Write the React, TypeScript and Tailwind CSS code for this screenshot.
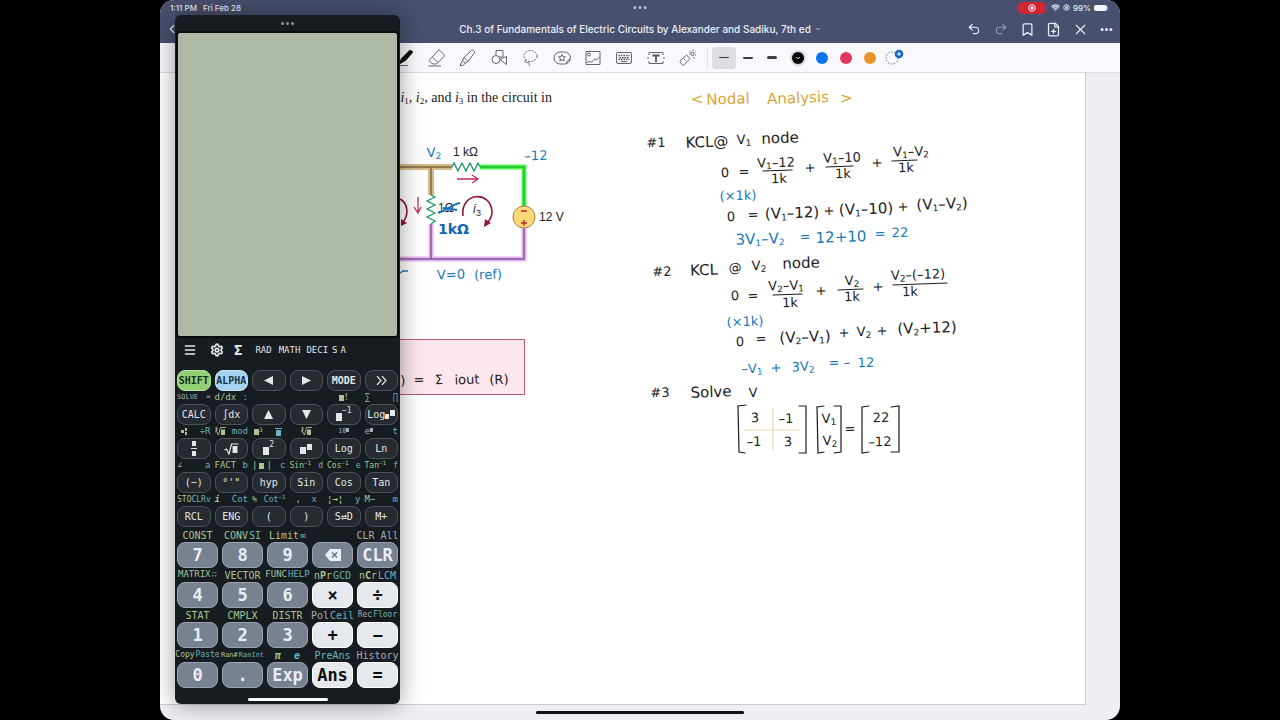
import { Fragment } from "react";
import type { ReactNode } from "react";
import { Bookmark, Ellipsis, FilePlus, Menu, Redo2, Settings, Undo2, Wifi, X, ChevronDown, ChevronLeft } from "lucide-react";

/* ---------- handwriting ---------- */

type Tone = "black" | "blue" | "gold";

// [text, centre x, centre y, tone] in page coordinates, "_n" is a subscript
type Stroke = [string, number, number, Tone?];

const TONES: Record<Tone, string> = {
  black: "text-[#1c1c1e]",
  blue: "text-[#1678b8]",
  gold: "text-[#d9a336]",
};

// headings and the expanded equations are written larger than the fractions
const LARGE: Stroke[] = [
  ["<", 537, 26, "gold"],
  ["Nodal", 568, 26, "gold"],
  ["Analysis", 638, 25, "gold"],
  [">", 686, 25, "gold"],
  ["KCL@", 547, 69],
  ["node", 620, 65],
  ["(V_1–12)", 632, 140],
  ["(V_1–10)", 706, 136],
  ["(V_1–V_2)", 782, 131],
  ["3V_1–V_2", 600, 166, "blue"],
  ["12+10", 681, 164, "blue"],
  ["KCL", 544, 197],
  ["node", 641, 190],
  ["(V_2–V_1)", 645, 264],
  ["(V_2+12)", 767, 255],
  ["Solve", 551, 319],
];

const NOTES: Stroke[] = [
  ["#1", 496, 70],
  ["V_1", 584, 67],
  ["0", 565, 100],
  ["=", 584, 99],
  ["V_1–12", 616, 90],
  ["1k", 619, 106],
  ["+", 650, 95],
  ["V_1–10", 682, 85],
  ["1k", 683, 101],
  ["+", 717, 90],
  ["V_1–V_2", 751, 79],
  ["1k", 746, 95],
  ["(×1k)", 578, 123, "blue"],
  ["0", 571, 144],
  ["=", 593, 142],
  ["+", 669, 138],
  ["+", 743, 134],
  ["=", 645, 164, "blue"],
  ["=", 720, 161, "blue"],
  ["22", 740, 160, "blue"],
  ["#2", 502, 199],
  ["@", 575, 195],
  ["V_2", 599, 193],
  ["0", 575, 223],
  ["=", 593, 223],
  ["V_2–V_1", 626, 213],
  ["1k", 630, 230],
  ["+", 661, 218],
  ["V_2", 692, 208],
  ["1k", 692, 224],
  ["+", 718, 214],
  ["V_2–(–12)", 758, 202],
  ["1k", 750, 219],
  ["(×1k)", 585, 249, "blue"],
  ["0", 580, 269],
  ["=", 601, 266],
  ["+", 684, 260],
  ["V_2", 704, 259],
  ["+", 722, 258],
  ["–V_1", 592, 296, "blue"],
  ["+", 616, 295, "blue"],
  ["3V_2", 643, 294, "blue"],
  ["=", 674, 290, "blue"],
  ["–", 687, 290, "blue"],
  ["12", 706, 290, "blue"],
  ["#3", 500, 320],
  ["V", 593, 320],
  ["3", 595, 345],
  ["–1", 626, 346],
  ["–1", 594, 369],
  ["3", 628, 369],
  ["V_1", 669, 346],
  ["V_2", 670, 368],
  ["=", 690, 356],
  ["22", 721, 345],
  ["–12", 720, 369],
  [")", 243, 308],
  ["=", 259, 307],
  ["Σ", 279, 307],
  ["iout", 307, 307],
  ["(R)", 339, 307],
  ["V_2", 274, 80, "blue"],
  ["–12", 376, 83, "blue"],
  ["V=0", 291, 202, "blue"],
  ["(ref)", 328, 202, "blue"],
];

function withSubs(text: string) {
  return text.split(/_(\d)/).map((part, i) => (i % 2 ? <sub key={i} className="text-[9px]">{part}</sub> : <Fragment key={i}>{part}</Fragment>));
}

function Ink({ strokes, size }: { strokes: Stroke[]; size: string }) {
  return (
    <>
      {strokes.map(([text, x, y, tone = "black"], i) => (
        <span
          key={i}
          className={`absolute -translate-x-1/2 -translate-y-1/2 -rotate-2 whitespace-nowrap font-['DejaVu_Sans','Noto_Sans',sans-serif] leading-4 ${size} ${TONES[tone]}`}
          style={{ left: x, top: y }}
        >
          {withSubs(text)}
        </span>
      ))}
    </>
  );
}

// fraction bars and matrix brackets
function Rules() {
  return (
    <svg className="absolute left-[560px] top-[80px] h-[310px] w-[240px]" viewBox="720 153 240 310" fill="none" stroke="#1c1c1e" strokeWidth="1.2" strokeLinecap="round">
      <path d="M763 171l29-1M826 167l27-1M892 161l25-1M773 295l29-1M838 290l25-1M893 285l54-2" />
      <path d="M746 405l-8 1 1 46 6 1M799 406h7v47h-7M824 406l-7 1 1 46 6-1M834 406h7v46l-7 1M869 406l-7 1v46l7-1M891 407l8-1v46h-8" />
      <path d="M773 408v42M744 430h56" stroke="#e9d9a8" />
    </svg>
  );
}

function Circuit() {
  return (
    <svg className="absolute left-[240px] top-[67px] h-[140px] w-[170px]" viewBox="400 140 170 140" fill="none">
      <path d="M400 167h52M431 167v28" stroke="#d3bb8c" strokeWidth="6" />
      <path d="M400 167h52M431 167v28" stroke="#80683c" strokeWidth="1.5" />
      <path d="M480 167h44v40" stroke="#4cf84f" strokeWidth="5" />
      <path d="M480 167h44v40" stroke="#1dbb2b" strokeWidth="1.5" />
      <path d="M400 259h124v-31M431 224v35" stroke="#e3b3ee" strokeWidth="5" />
      <path d="M400 259h124v-31M431 224v35" stroke="#8b55a0" strokeWidth="1.5" />
      <path d="M452 167l2-4 4 8 4-8 4 8 4-8 4 8 4-8 2 4" stroke="#22946c" strokeWidth="1.3" />
      <path d="M431 195l4 2-8 4 8 4-8 4 8 4-8 4 8 4-4 3" stroke="#22946c" strokeWidth="1.3" />
      <circle cx="524" cy="217" r="11" fill="#ffd878" stroke="#a5803f" />
      <path d="M521 211h6M521 223h6M524 220v6" stroke="#c0272d" strokeWidth="1.4" />
      <path d="M457 179h21M472 175l6 4-6 4M418 197v15M414 207l4 6 3-6" stroke="#c32f52" strokeWidth="1.3" />
      <path d="M463 216c-3-24 28-26 29-4 0 5-2 8-5 11M400 199c8 4 9 16 3 23" stroke="#8f1738" strokeWidth="1.6" />
      <path d="M484 227l1-8 6 4zM401 226l0-7 6 4z" fill="#8f1738" />
      <g className="font-['Liberation_Sans',Arial,sans-serif]" fill="#1c1c1e">
        <text x="453" y="156" fontSize="12">1 kΩ</text>
        <text x="438" y="212" fontSize="12">1Ω</text>
        <text x="539" y="221" fontSize="12">12 V</text>
        <text x="473" y="213" fontSize="12" fontStyle="italic">i</text>
        <text x="476" y="216" fontSize="9">3</text>
      </g>
      <path d="M438 213c7-2 15-9 22-10M443 208l14 2" stroke="#1272b8" strokeWidth="1.8" />
      <text x="438" y="234" fontSize="14" fontWeight="700" fill="#1467b0" className="font-['DejaVu_Sans',sans-serif]">1kΩ</text>
      <path d="M400 273l3-2h5" stroke="#1678b8" strokeWidth="1.4" />
    </svg>
  );
}

/* ---------- note app chrome ---------- */

function StatusBar() {
  return (
    <div className="relative flex h-[15px] items-center justify-between pl-[10px] pr-[11px] text-[8px] font-medium">
      <div className="flex gap-[6px]">
        <span>1:11 PM</span>
        <span>Fri Feb 28</span>
      </div>
      <div className="absolute left-1/2 flex -translate-x-1/2 gap-[2px]">
        <i className="size-[3px] rounded-full bg-[#b9bfd2]" />
        <i className="size-[3px] rounded-full bg-[#b9bfd2]" />
        <i className="size-[3px] rounded-full bg-[#b9bfd2]" />
      </div>
      <div className="flex items-center gap-[3px]">
        <span className="mr-[2px] flex h-3 w-7 items-center justify-center rounded-[5px] bg-[#cf2432]">
          <svg className="size-2" viewBox="0 0 8 8" fill="none" stroke="#fff">
            <circle cx="4" cy="4" r="3.3" />
            <circle cx="4" cy="4" r="1.2" fill="#fff" />
          </svg>
        </span>
        <Wifi className="size-[9px]" strokeWidth={3} />
        <svg className="size-[7px]" viewBox="0 0 8 8" fill="none" stroke="#dfe3ef">
          <circle cx="4" cy="4" r="3.2" />
          <path d="M3 4V3a1 1 0 0 1 2 0v1M2.800 4h2.400v1.500H2.800z" />
        </svg>
        <span>99%</span>
        <svg className="h-[6px] w-[15px]" viewBox="0 0 15 6">
          <rect width="13" height="6" rx="2" fill="#f2f4fa" />
          <path d="M14 2v2" stroke="#a9b0c8" />
        </svg>
      </div>
    </div>
  );
}

function TitleBar() {
  const button = "flex h-5 items-center justify-center";
  return (
    <div className="relative flex h-7 items-center justify-between pl-[5px]">
      <button aria-label="Back">
        <ChevronLeft className="size-[14px]" />
      </button>
      <h1 className="absolute left-1/2 flex -translate-x-1/2 items-center gap-1 whitespace-nowrap text-[10px] font-medium">
        Ch.3 of Fundamentals of Electric Circuits by Alexander and Sadiku, 7th ed
        <ChevronDown className="size-[6px]" strokeWidth={3} />
      </h1>
      <div className="grid w-[159px] grid-cols-6">
        <button aria-label="Undo" className={button}><Undo2 className="size-[14px]" /></button>
        <button aria-label="Redo" className={`${button} opacity-45`}><Redo2 className="size-[14px]" /></button>
        <button aria-label="Bookmark" className={button}><Bookmark className="size-[15px]" /></button>
        <button aria-label="Add page" className={button}><FilePlus className="size-[15px]" /></button>
        <button aria-label="Close" className={button}><X className="size-[17px]" strokeWidth={1.5} /></button>
        <button aria-label="More" className={button}><Ellipsis className="size-[15px]" strokeWidth={3} /></button>
      </div>
    </div>
  );
}

const TOOLS: [string, ReactNode][] = [
  ["Pen", <><path d="M16 3L9 11l-5 3 2-4 8-8z" fill="#111" stroke="#111" strokeWidth="2" /><path d="M2 16.500h10" /></>],
  ["Eraser", <><path d="M2.500 11L11 1.500q1-.8 2 0l4 4q.8 1 0 2L9.500 15H6l-3.500-2.500q-.8-.7 0-1.500zM5.500 8l5.500 5.500M1.500 17H14" /></>],
  ["Highlighter", <><path d="M6 8.500L13.500 1.500q1-.8 2 0l.8.8q.8.8 0 1.800L10 12.500zM6 8.500l-1.500 3 3 2.500 2.500-1.500M4.500 11.500L2 16.500h3l2.500-2.500" /></>],
  ["Shapes", <><path d="M6 6V1.500h7V8H9.500" /><circle cx="6" cy="10.500" r="4" /><path d="M10 10.500l6.500-3v8z" /></>],
  ["Lasso", <><ellipse cx="9.500" cy="7" rx="6.500" ry="5.500" strokeDasharray="2 1.200" /><path d="M5 11c-2 1-1 3 1 2.500s3 1 2 3.500" /></>],
  ["Elements", <><path d="M13 15H7A6 6 0 0 1 7 3h4.500a6 6 0 0 1 6 6q-.2 4-4.500 6 .5-3.500 4-5" /><path d="M9 5.500l1 2.200 2.400.2-1.800 1.600.6 2.400L9 10.700l-2.200 1.200.6-2.400-1.800-1.600L8 7.700z" /></>],
  ["Image", <><path d="M2 2.500h14v13H2z" /><circle cx="5" cy="5.500" r="1.500" /><path d="M2.500 13.500l3-1 2 .5 3.500-3 1.500 1 3-3" /></>],
  ["Keyboard", <><rect x="1.500" y="3.500" width="15" height="11" rx="1.500" /><path d="M3.500 6.500h11M4.500 8.700h10M3.500 10.500h11" strokeDasharray="1.500 1" strokeWidth="1.400" /><path d="M6 12.700h6" /></>],
  ["Text", <><path d="M2 6V3.500h14V6M2 12v2.500h14V12M1 8v2M17 8v2" /><path d="M5.500 6.500h7M9 6.500V13" strokeWidth="1.800" /></>],
  ["Laser pointer", <><path d="M3 11l5.500-5 3.500 3.500-5.500 6q-1 1-2 .2L2.500 14q-1-1.500.5-3zM6 10l1.500 1.500" /><path d="M13 3.500l-1.500-1M15 2V.5M17 3.500l1-1M17 6h1.500M15.500 8l1 1.500M11 5.500l.8-.5" /><circle cx="14.500" cy="5" r="1.600" /></>],
];

const WIDTHS = ["h-px", "h-[2px]", "h-[3px]"];
const COLORS = [
  ["Blue", "bg-[#0b73ef]"],
  ["Red", "bg-[#e4365c]"],
  ["Orange", "bg-[#e8922a]"],
];

function ToolBar() {
  return (
    <div className="flex h-[30px] items-center border-b border-[#dddce2] bg-[#faf8fc] pl-[229px]">
      <div className="grid w-[314px] grid-cols-10">
        {TOOLS.map(([name, art]) => (
          <button key={name} aria-label={name} className="flex h-6 items-center justify-center">
            <svg className="size-[18px]" viewBox="0 0 18 18" fill="none" stroke="#55555b" strokeWidth="0.9" strokeLinejoin="round">{art}</svg>
          </button>
        ))}
      </div>
      <div className="mx-1 h-5 w-px bg-[#dedde3]" />
      <div className="mr-[2px] flex">
        {WIDTHS.map((h, i) => (
          <button key={h} aria-label={`Stroke width ${i + 1}`} className={`flex h-[22px] w-6 items-center justify-center rounded ${i === 0 ? "bg-[#dddce0]" : ""}`}>
            <i className={`w-[10px] rounded-full bg-[#3c3c40] ${h}`} />
          </button>
        ))}
      </div>
      <button aria-label="Black" className="flex h-6 w-6 items-center justify-center">
        <span className="flex size-3 items-center justify-center rounded-full bg-black ring-2 ring-[#dbdadf]">
          <ChevronDown className="size-[6px] text-white" strokeWidth={4} />
        </span>
      </button>
      {COLORS.map(([name, color]) => (
        <button key={name} aria-label={name} className="flex h-6 w-6 items-center justify-center">
          <i className={`size-3 rounded-full ${color}`} />
        </button>
      ))}
      <button aria-label="Add colour" className="flex h-6 w-6 items-center justify-center">
        <svg className="h-5 w-[20px]" viewBox="0 0 20 20" fill="none">
          <circle cx="8" cy="10" r="6" stroke="#3f6ea8" strokeDasharray="1.500 1.500" />
          <circle cx="15" cy="6" r="4.300" fill="#1668c9" />
          <path d="M15 4v4M13 6h4" stroke="#fff" />
        </svg>
      </button>
    </div>
  );
}

/* ---------- calculator ---------- */

const Sq = ({ className = "h-2 w-[6px]" }: { className?: string }) => <i className={`inline-block bg-current ${className}`} />;
const Mini = () => <Sq className="h-[6px] w-[5px]" />;

const GREEN = "text-[#a9c492]";
const TEAL = "text-[#6cb3bb]";
const GREY = "text-[#a4acb0]";

interface KeyDef {
  id: string;
  face: ReactNode;
  shift?: ReactNode;
  alpha?: ReactNode;
  label?: string;
  tone?: string;
}

const Root = ({ className }: { className: string }) => (
  <svg className={className} viewBox="0 0 14 12" fill="none" stroke="currentColor" strokeWidth="1.200">
    <path d="M0 7l2-1 2.500 5L7 1h7" />
    <path d="M8 3h5v7H8z" fill="currentColor" stroke="none" />
  </svg>
);

const CubeRoot = () => (
  <svg className="h-[9px] w-[11px]" viewBox="0 0 11 9" fill="none" stroke="currentColor">
    <path d="M0 5l1.500-.5L3.500 8 5.500.5H11M.5.500h1.500v3H.5M.5 2h1.500" strokeWidth="0.900" />
    <path d="M6 2.500h4V8H6z" fill="currentColor" stroke="none" />
  </svg>
);

const SMALL_KEYS: KeyDef[] = [
  { id: "shift", face: "SHIFT", tone: "bg-[#93cf75] text-[#16301a] font-bold border-[#b5e29c]" },
  { id: "alpha", face: "ALPHA", tone: "bg-[#a5d2ee] text-[#1b3349] font-bold border-[#c8e5f6]" },
  { id: "left", face: <svg className="size-[9px]" viewBox="0 0 8 8"><path d="M0 4l8-4v8z" fill="currentColor" /></svg> },
  { id: "right", face: <svg className="size-[9px]" viewBox="0 0 8 8"><path d="M8 4L0 0v8z" fill="currentColor" /></svg> },
  { id: "mode", face: <b>MODE</b> },
  { id: "fast", face: <svg className="h-[9px] w-[11px]" viewBox="0 0 11 9" fill="none" stroke="currentColor" strokeWidth="1.200"><path d="M1 0l4 4.500L1 9M6 0l4 4.500L6 9" /></svg> },
  { id: "calc", face: "CALC", shift: <span className={GREY}>SOLVE</span>, alpha: <span className={GREY}>=</span>, label: "text-[7px]" },
  { id: "int", face: "∫dx", shift: "d/dx", alpha: ":" },
  { id: "up", face: <svg className="size-[9px]" viewBox="0 0 8 8"><path d="M4 0l4 8H0z" fill="currentColor" /></svg> },
  { id: "down", face: <svg className="size-[9px]" viewBox="0 0 8 8"><path d="M4 8l4-8H0z" fill="currentColor" /></svg> },
  { id: "inv", face: <><Sq className="mt-1 h-2 w-[6px]" /><span className="mb-2 text-[8px]">−1</span></>, shift: <><Mini />!</> },
  { id: "logb", face: <>Log<Sq className="mt-1 h-[5px] w-1" /><Sq className="mb-1 ml-px h-[6px] w-[5px]" /></>, shift: "∑", alpha: "∏" },
  { id: "frac", face: <span className="flex flex-col items-center gap-[2px]"><Sq className="h-[5px] w-1" /><i className="h-px w-[6px] bg-current" /><Sq className="h-[5px] w-1" /></span>, shift: <span className="ml-1 flex items-center gap-px"><Sq className="size-[3px]" /><span className="flex flex-col gap-px"><Sq className="h-[3px] w-[2px]" /><Sq className="h-[3px] w-[2px]" /></span></span>, alpha: "÷R" },
  { id: "sqrt", face: <Root className="h-3 w-[15px]" />, shift: <CubeRoot />, alpha: "mod" },
  { id: "sq", face: <><Sq className="mt-1 h-2 w-[6px]" /><span className="mb-2 text-[8px]">2</span></>, shift: <span className="ml-[2px] flex items-center"><Mini /><span className="mb-1 text-[6px]">3</span></span>, alpha: <span className="mr-1 flex flex-col items-center gap-px"><i className="h-px w-[7px] bg-current" /><Mini /></span> },
  { id: "pow", face: <><Sq className="mt-1 h-[7px] w-[6px]" /><Sq className="mb-1 ml-px h-[6px] w-[5px]" /></>, shift: <CubeRoot /> },
  { id: "log", face: "Log", shift: <span className={`flex items-center ${GREY}`}>10<Sq className="mb-1 h-1 w-[3px]" /></span>, label: "text-[7px]" },
  { id: "ln", face: "Ln", shift: <span className={`flex items-center ${GREY}`}>e<Sq className="mb-1 h-1 w-[3px]" /></span>, alpha: "t" },
  { id: "neg", face: "(−)", shift: "∠", alpha: "a" },
  { id: "dms", face: "°'\"", shift: "FACT", alpha: "b" },
  { id: "hyp", face: "hyp", shift: <span className="flex items-center gap-[2px]">|<Mini />|</span>, alpha: "c" },
  { id: "sin", face: "Sin", shift: <>Sin<sup className="text-[6px]">−1</sup></>, alpha: "d", label: "text-[8px]" },
  { id: "cos", face: "Cos", shift: <>Cos<sup className="text-[6px]">−1</sup></>, alpha: "e", label: "text-[8px]" },
  { id: "tan", face: "Tan", shift: <>Tan<sup className="text-[6px]">−1</sup></>, alpha: "f", label: "text-[8px]" },
  { id: "rcl", face: "RCL", shift: "STO", alpha: "CLRv", label: "text-[8px]" },
  { id: "eng", face: "ENG", shift: <b className="italic">i</b>, alpha: "Cot" },
  { id: "open", face: "(", shift: "%", alpha: <>Cot<sup className="text-[6px]">−1</sup></>, label: "text-[8px]" },
  { id: "close", face: ")", shift: <span className="ml-[6px]">,</span>, alpha: <span className="mr-[6px]">x</span> },
  { id: "sd", face: "S⇄D", shift: <b>¦→¦</b>, alpha: "y" },
  { id: "mplus", face: "M+", shift: "M−", alpha: "m" },
];

const SLATE = "bg-[#77818f] border-[#9aa3b0] text-[#e9edf6]";
const WHITE = "bg-[#e5e8ed] border-white text-[#0d0f12]";

const BIG_KEYS: KeyDef[] = [
  { id: "7", face: "7", shift: "CONST" },
  { id: "8", face: "8", shift: "CONV", alpha: "SI" },
  { id: "9", face: "9", shift: "Limit", alpha: "∞" },
  { id: "del", face: <svg className="h-3 w-4" viewBox="0 0 16 12"><path d="M0 6l5-6h11v12H5z" fill="#e9edf6" /><path d="M7 3.500l5 5M12 3.500l-5 5" stroke="#6b7480" strokeWidth="1.500" /></svg> },
  { id: "clr", face: "CLR", shift: <span className={GREY}>CLR All</span> },
  { id: "4", face: "4", shift: "MATRIX", alpha: "∷", label: "text-[9px]" },
  { id: "5", face: "5", shift: "VECTOR" },
  { id: "6", face: "6", shift: "FUNC", alpha: "HELP", label: "text-[9px]" },
  { id: "mul", face: "×", tone: WHITE, shift: <>n<b>P</b>r</>, alpha: "GCD" },
  { id: "div", face: "÷", tone: WHITE, shift: <>n<b>C</b>r</>, alpha: "LCM" },
  { id: "1", face: "1", shift: "STAT" },
  { id: "2", face: "2", shift: "CMPLX" },
  { id: "3", face: "3", shift: "DISTR" },
  { id: "add", face: "+", tone: WHITE, shift: <span className={GREY}>Pol</span>, alpha: "Ceil" },
  { id: "sub", face: "−", tone: WHITE, shift: <span className={GREY}>Rec</span>, alpha: "Floor", label: "text-[8px]" },
  { id: "0", face: "0", shift: "Copy", alpha: "Paste", label: "text-[8px]" },
  { id: "dot", face: ".", shift: "Ran#", alpha: "RanInt", label: "text-[7px]" },
  { id: "exp", face: "Exp", shift: <b className="mr-3 italic">π</b>, alpha: <b className="italic">e</b> },
  { id: "ans", face: "Ans", tone: WHITE, alpha: "PreAns" },
  { id: "eq", face: "=", tone: WHITE, shift: <span className={GREY}>History</span> },
];

function Label({ def, align, size }: { def: KeyDef; align: string; size: string }) {
  return (
    <span className={`flex items-center whitespace-nowrap ${align} ${def.label ?? size}`}>
      {def.shift && <span className={`flex items-center ${GREEN}`}>{def.shift}</span>}
      {def.alpha && <span className={`flex items-center ${TEAL}`}>{def.alpha}</span>}
    </span>
  );
}

function Calculator() {
  return (
    <section aria-label="Calculator" className="absolute left-[15px] top-[15px] w-[225px] overflow-hidden rounded-md bg-[#171c21] pb-[3px] text-[#e3e6ea] shadow-[0_0_24px_rgba(0,0,0,0.4)] font-['DejaVu_Sans_Mono','Liberation_Mono',monospace]">
      <div className="flex h-4 items-center justify-center gap-[2px]">
        <i className="size-[3px] rounded-full bg-[#8d9297]" />
        <i className="size-[3px] rounded-full bg-[#8d9297]" />
        <i className="size-[3px] rounded-full bg-[#8d9297]" />
      </div>
      <div className="mx-px h-[307px] rounded border-2 border-[#090c0e] bg-[#afbaa6]" />
      <div className="flex h-[23px] items-center pl-2 text-[9px] leading-3">
        <button aria-label="Menu"><Menu className="size-[14px]" strokeWidth={2.5} /></button>
        <button aria-label="Settings" className="ml-[13px]"><Settings className="size-[14px]" strokeWidth={3} /></button>
        <b className="ml-[10px] text-[14px]">Σ</b>
        <span className="ml-[13px]">RAD</span>
        <span className="ml-[7px]">MATH</span>
        <span className="ml-[6px]">DECI</span>
        <span className="ml-1">S</span>
        <span className="ml-[3px]">A</span>
      </div>
      <div className="-mt-1 grid grid-cols-6 gap-x-1 px-[2px]">
        {SMALL_KEYS.map((k) => (
          <div key={k.id} className="grid grid-cols-1 grid-rows-[13px_21px]">
            <Label def={k} align={k.shift && k.alpha ? "justify-between" : "justify-center"} size="text-[9px]" />
            <button aria-label={k.id} className={`flex items-center justify-center rounded-lg border text-[10px] leading-none ${k.tone ?? "border-[#4c5258] bg-[#262b30]"}`}>
              {k.face}
            </button>
          </div>
        ))}
      </div>
      <div className="mt-px grid grid-cols-5 gap-x-1 px-[2px]">
        {BIG_KEYS.map((k) => (
          <div key={k.id} className="grid grid-cols-1 grid-rows-[14px_26px]">
            <Label def={k} align="justify-center gap-px" size="text-[10px]" />
            <button aria-label={k.id} className={`flex items-center justify-center rounded-lg border text-[17px] font-bold leading-none ${k.tone ?? SLATE}`}>
              {k.face}
            </button>
          </div>
        ))}
      </div>
      <div className="mx-auto mt-[10px] h-[3px] w-20 rounded-full bg-white" />
    </section>
  );
}

export default function App() {
  return (
    <div className="flex h-screen justify-center overflow-hidden bg-black">
      <div className="relative flex w-3/4 flex-col overflow-hidden rounded-[14px] bg-[#efeef3] font-['Inter','Liberation_Sans',sans-serif]">
        <header className="bg-[#48506f] text-[#eceff8]">
          <StatusBar />
          <TitleBar />
        </header>
        <ToolBar />
        <main className="flex-1 pr-[34px]">
          <div className="relative h-full border-b border-r border-[#cfced4] bg-white">
            <p className="absolute right-[533px] top-[15px] whitespace-nowrap text-[14px] leading-5 text-[#222] font-['Liberation_Serif',serif]">
              <em>i</em><sub className="text-[9px]">1</sub>, <em>i</em><sub className="text-[9px]">2</sub>, and <em>i</em><sub className="text-[9px]">3</sub> in the circuit in
            </p>
            <Circuit />
            <div className="absolute left-[200px] top-[266px] h-14 w-[165px] border border-[#bf5672] bg-[#fde6ec]" />
            <Rules />
            <Ink strokes={LARGE} size="text-[15px]" />
            <Ink strokes={NOTES} size="text-[13px]" />
          </div>
        </main>
        <footer className="flex h-[15px] items-center justify-center">
          <div className="h-[3px] w-52 rounded-full bg-[#111]" />
        </footer>
        <Calculator />
      </div>
    </div>
  );
}
